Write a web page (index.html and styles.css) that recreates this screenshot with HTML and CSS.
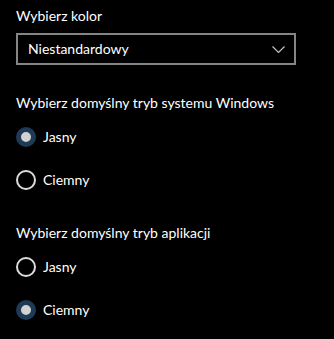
FILE: index.html
```html
<!DOCTYPE html>
<html lang="pl">
<head>
<meta charset="utf-8">
<link rel="stylesheet" href="styles.css">
</head>
<body>
<div class="page">
  <div class="label">Wybierz kolor</div>
  <div class="select">
    <span class="select-text">Niestandardowy</span>
    <svg class="chevron" width="13" height="7" viewBox="0 0 13 7"><path d="M0.5 0.5 L6.5 6.5 L12.5 0.5" fill="none" stroke="#c8c8c8" stroke-width="1.1"/></svg>
  </div>

  <div class="label section">Wybierz domyślny tryb systemu Windows</div>
  <div class="radios">
    <div class="row"><span class="radio checked"></span><span>Jasny</span></div>
    <div class="row"><span class="radio"></span><span>Ciemny</span></div>
  </div>

  <div class="label section2">Wybierz domyślny tryb aplikacji</div>
  <div class="radios">
    <div class="row"><span class="radio"></span><span>Jasny</span></div>
    <div class="row"><span class="radio checked"></span><span>Ciemny</span></div>
  </div>
</div>
</body>
</html>
```

FILE: styles.css
```css
html, body {
  margin: 0;
  padding: 0;
  background: #000;
}
.page {
  padding: 6px 0 0 16px;
  font-family: "Lato", "Open Sans", sans-serif;
  font-size: 14px;
  line-height: 20px;
  color: #fff;
}
.label {
  height: 20px;
}
.select {
  margin-top: 7px;
  width: 280px;
  height: 32px;
  box-sizing: border-box;
  border: 2px solid #858585;
  display: flex;
  align-items: center;
  justify-content: space-between;
  padding: 0 9px 0 10px;
}
.select-text {
  color: #fff;
}
.chevron {
  display: block;
}
.section {
  margin-top: 28px;
}
.section2 {
  margin-top: 33px;
}
.radios {
  margin-top: 14px;
  display: flex;
  flex-direction: column;
  gap: 23px;
}
.row {
  display: flex;
  align-items: center;
  height: 20px;
  gap: 7px;
}
.radio {
  width: 20px;
  height: 20px;
  box-sizing: border-box;
  border: 2px solid #dcdcdc;
  border-radius: 50%;
  display: flex;
  align-items: center;
  justify-content: center;
}
.radio.checked {
  border: 5px solid #1e3a56;
  background: #d2d2d2;
}
```
